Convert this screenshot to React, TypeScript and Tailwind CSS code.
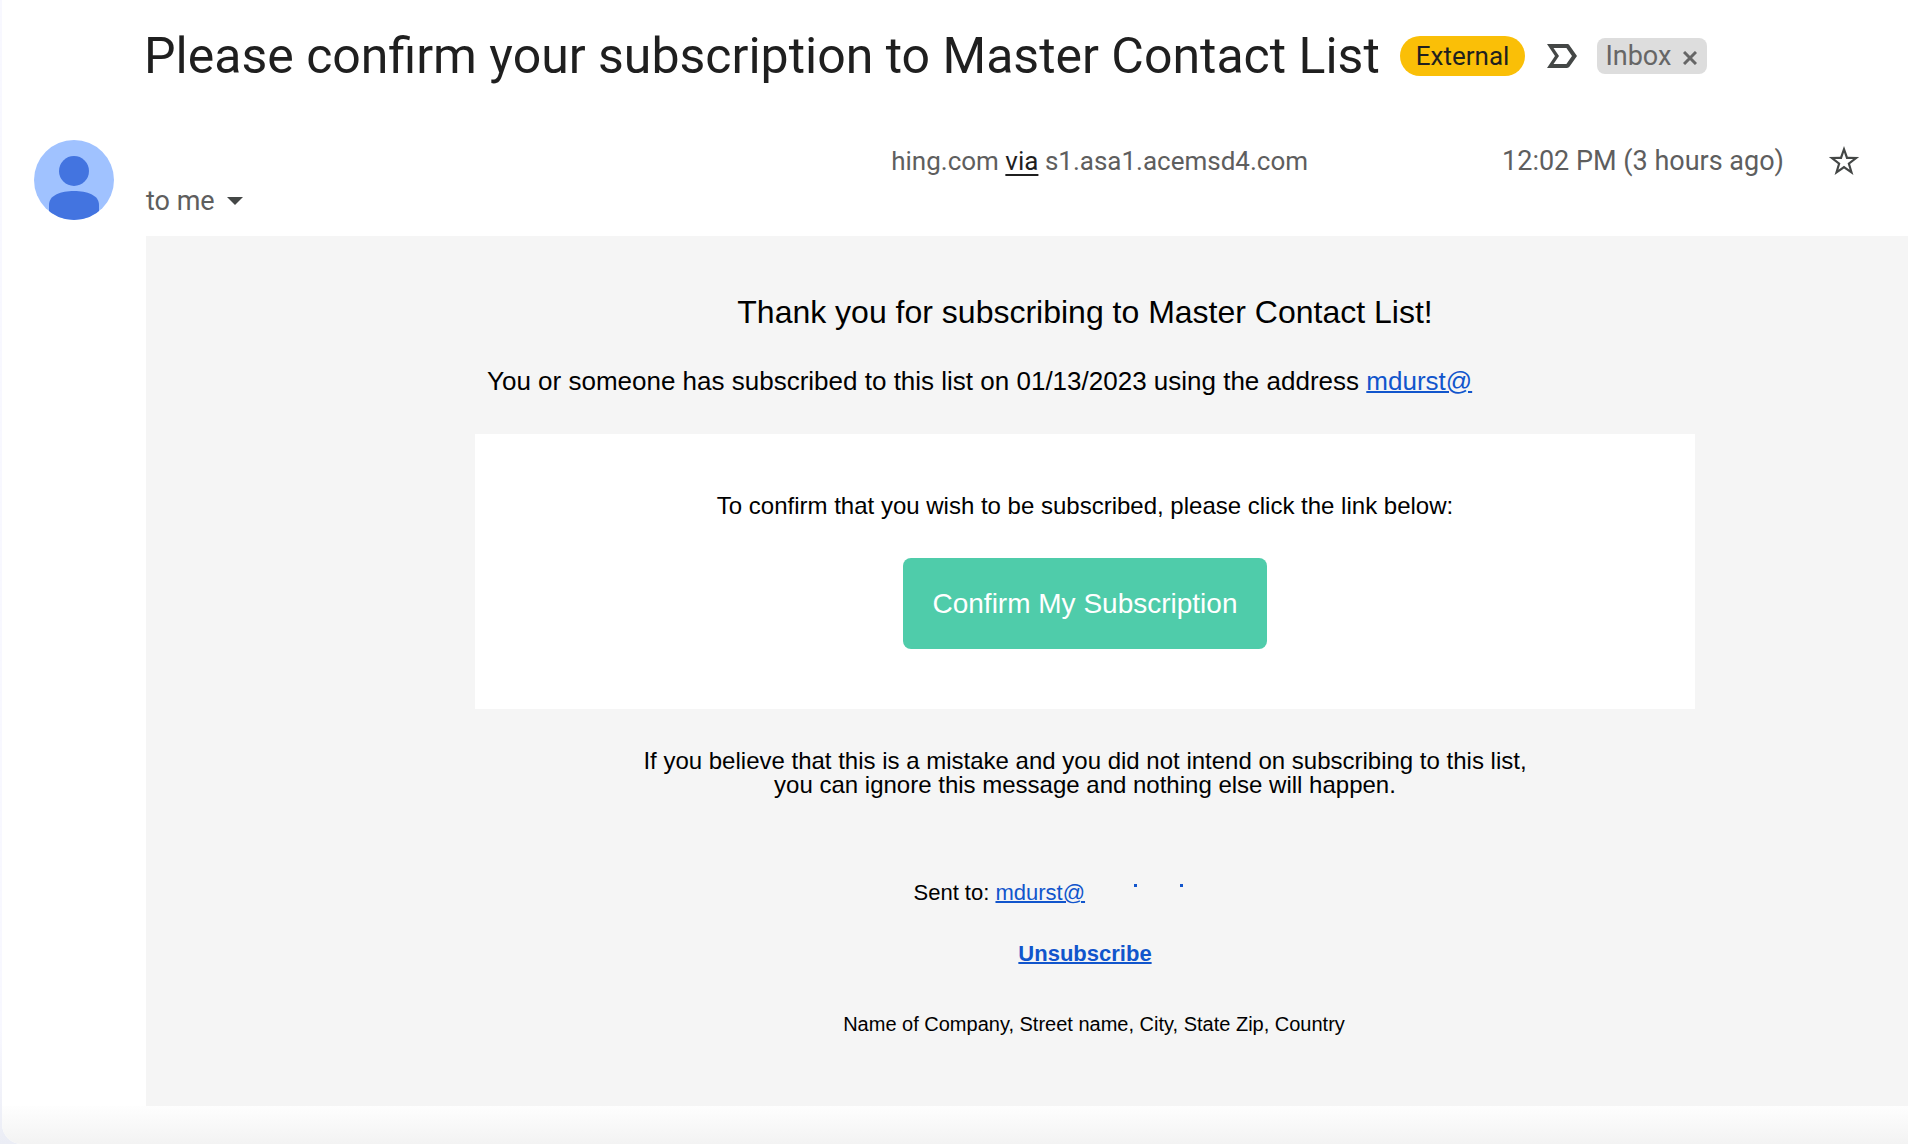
function Avatar() {
  return (
    <svg viewBox="0 0 80 80" className="size-20 shrink-0" role="img" aria-label="Sender">
      <defs>
        <clipPath id="avatar-clip">
          <circle cx="40" cy="40" r="40" />
        </clipPath>
      </defs>
      <g clipPath="url(#avatar-clip)">
        <rect width="80" height="80" fill="#a0c2ff" />
        <circle cx="40" cy="31" r="15" fill="#4374e0" />
        <path d="M15 80V65C15 55 27 51 40 51S65 55 65 65V80Z" fill="#4374e0" />
      </g>
    </svg>
  );
}

function ImportantIcon() {
  return (
    <svg viewBox="0 0 30 24" className="h-6 w-[30px]" fill="#444746" fillRule="evenodd">
      <path d="M0 0H20C21 0 22 .5 22.600 1.400L30 12L22.600 22.600C22 23.500 21 24 20 24H0L8 12ZM6.500 4L12 12L6.500 20H19.400L25 12L19.400 4Z" />
    </svg>
  );
}

function StarIcon() {
  return (
    <svg viewBox="0 0 36 36" className="size-9" fill="#444746" fillRule="evenodd">
      <path d="M18 3L21.800 13.800L33.200 14.100L24.100 21L27.400 31.900L18 25.400L8.600 31.900L11.900 21L2.800 14.100L14.200 13.800ZM18 9.400L20.200 15.900L27.100 16L21.600 20.200L23.600 26.800L18 22.800L12.400 26.800L14.400 20.200L8.900 16L15.800 15.900Z" />
    </svg>
  );
}

function Subject() {
  return (
    <div className="flex items-center pt-[26px] pl-[142px]">
      <h1 className="text-[50px] leading-[60px] text-[#1f1f1f] whitespace-nowrap">
        Please confirm your subscription to Master Contact List
      </h1>
      <span className="ml-5 flex h-10 items-center rounded-full bg-[#fabf07] px-4 text-[26px] text-[#1f1f1f]">
        External
      </span>
      <button className="ml-[22px]" aria-label="Mark as important">
        <ImportantIcon />
      </button>
      <span className="ml-5 flex h-9 items-center gap-3 rounded-lg bg-[#ddd] pr-[10px] pl-2 text-[27px] text-[#666]">
        Inbox
        <button aria-label="Remove label Inbox">
          <svg viewBox="0 0 14 14" className="mt-1 size-[14px]" stroke="#666" strokeWidth="3">
            <path d="M1 1L13 13M13 1L1 13" />
          </svg>
        </button>
      </span>
    </div>
  );
}

function SenderRow() {
  return (
    <div className="flex gap-8 pt-[54px] pr-[46px] pb-[15px] pl-8 text-[#5e5e5e]">
      <Avatar />
      <div className="flex-1 pt-px">
        <div className="flex h-10 items-center justify-end">
          <p className="mr-[194px] text-[26px]">
            hing.com{" "}
            <a href="#via" className="text-[#1f1f1f] underline decoration-2 underline-offset-4">
              via
            </a>{" "}
            s1.asa1.acemsd4.com
          </p>
          <time className="text-[27px]">12:02 PM (3 hours ago)</time>
          <button className="ml-[42px]" aria-label="Star">
            <StarIcon />
          </button>
        </div>
        <button className="flex h-10 items-center gap-3 text-[27px]" aria-label="Show details">
          to me
          <svg viewBox="0 0 16 8" className="h-2 w-4" fill="#444746">
            <path d="M0 0H16L8 8Z" />
          </svg>
        </button>
      </div>
    </div>
  );
}

function Message() {
  return (
    <main className="ml-36 flex flex-col items-center bg-[#f5f5f5] pt-[58px] pb-[70px] pl-[116px] text-center font-['Liberation_Sans',Arial,sans-serif] text-black">
      <h2 className="text-[32px] leading-9">Thank you for subscribing to Master Contact List!</h2>
      <div className="w-full max-w-[1220px]">
        <p className="mt-9 pl-3 text-left text-[26px] leading-[30px]">
          You or someone has subscribed to this list on 01/13/2023 using the address{" "}
          <a href="#address" className="text-[#1155cc] underline decoration-2">
            mdurst@
          </a>
        </p>
        <section className="mt-[38px] flex flex-col items-center bg-white pt-[58px] pb-[60px]">
          <p className="text-2xl leading-7">To confirm that you wish to be subscribed, please click the link below:</p>
          <a href="#confirm" className="mt-[38px] rounded-lg bg-[#4fccaa] px-[30px] py-[30px] text-[28px] leading-[31px] text-white">
            Confirm My Subscription
          </a>
        </section>
      </div>
      <p className="mt-10 text-2xl leading-6">
        If you believe that this is a mistake and you did not intend on subscribing to this list,
        <br />
        you can ignore this message and nothing else will happen.
      </p>
      <div className="mt-[83px] flex w-[343px] text-[22px] leading-[26px]">
        <p>
          Sent to:{" "}
          <a href="#address" className="text-[#1155cc] underline decoration-2">
            mdurst@
          </a>
        </p>
        <span className="mt-1 ml-[49px] size-[3px] bg-[#1155cc]" />
        <span className="mt-1 ml-[43px] size-[3px] bg-[#1155cc]" />
      </div>
      <a href="#unsubscribe" className="mt-[35px] text-[22px] leading-[26px] font-bold text-[#1155cc] underline decoration-2">
        Unsubscribe
      </a>
      <p className="mt-[45px] pl-[18px] text-xl leading-6">Name of Company, Street name, City, State Zip, Country</p>
    </main>
  );
}

export default function App() {
  return (
    <div className="flex min-h-screen flex-col bg-linear-to-b from-[#f8f8ff] from-90% to-[#ebedf5] pl-[2px] font-[Roboto,sans-serif]">
      <div className="flex flex-1 flex-col overflow-hidden rounded-bl-[20px] bg-white">
        <header>
          <Subject />
          <SenderRow />
        </header>
        <Message />
        <div className="flex-1 bg-linear-to-b from-[#fefefe] to-[#f3f3f3]" />
      </div>
    </div>
  );
}
